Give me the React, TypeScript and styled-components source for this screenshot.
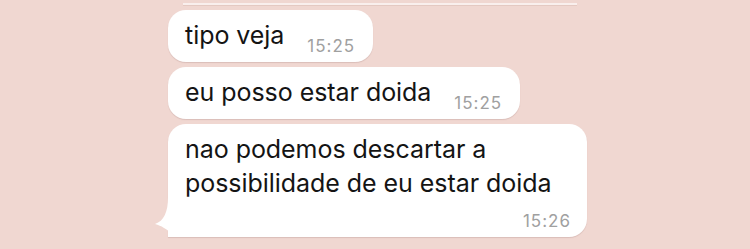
import React from "react";
import styled, { createGlobalStyle } from "styled-components";

const Global = createGlobalStyle`
  html, body { margin: 0; padding: 0; }
  body {
    width: 750px;
    height: 249px;
    overflow: hidden;
    background: #f0d7d1;
    font-family: Inter, "Noto Sans", "Liberation Sans", sans-serif;
    -webkit-font-smoothing: antialiased;
  }
`;

const Chat = styled.div`
  display: flex;
  flex-direction: column;
  align-items: flex-start;
  gap: 5px;
  padding-left: 168px;
  width: 750px;
  height: 249px;
  box-sizing: border-box;
`;

const PrevEdge = styled.div`
  margin-left: 15px;
  width: 394px;
  height: 2px;
  margin-top: 3px;
  background: rgba(255, 255, 255, 0.6);
  box-shadow: 0 1px 0 rgba(160, 120, 115, 0.15);
`;

const Bubble = styled.div<{ $tail?: boolean }>`
  position: relative;
  background: #ffffff;
  border-radius: 18px;
  ${(p) => (p.$tail ? "border-bottom-left-radius: 0;" : "")}
  box-shadow: 0 1px 1px rgba(120, 80, 75, 0.18);
  box-sizing: border-box;
`;

const InlineBubble = styled(Bubble)`
  display: flex;
  align-items: flex-end;
  gap: 23px;
  height: 52px;
  padding: 0 18px 10px 17px;
`;

const BlockBubble = styled(Bubble)`
  display: flex;
  flex-direction: column;
  width: 419px;
  height: 113px;
  padding: 8px 17px 0 17px;
`;

const Text = styled.div`
  font-size: 25px;
  line-height: 34px;
  color: #141414;
  letter-spacing: -0.05px;
  white-space: nowrap;
`;

const Time = styled.span<{ $block?: boolean }>`
  font-size: 17px;
  line-height: 20px;
  color: #a0a0a0;
  letter-spacing: 1px;
  margin-bottom: -4px;
  ${(p) => (p.$block ? "align-self: flex-end; margin-top: 11px; margin-right: -1px;" : "")}
`;

const Tail = styled.svg`
  position: absolute;
  left: -14px;
  bottom: 0;
  width: 34px;
  height: 40px;
`;

export default function App() {
  return (
    <>
      <Global />
      <Chat>
        <PrevEdge />
        <InlineBubble>
          <Text>tipo veja</Text>
          <Time>15:25</Time>
        </InlineBubble>
        <InlineBubble>
          <Text>eu posso estar doida</Text>
          <Time>15:25</Time>
        </InlineBubble>
        <BlockBubble $tail>
          <Tail viewBox="0 0 34 40">
            <path
              d="M14,0 C14,15 10,24 1,27 C8,29 12,32 16,35 C20,38 26,40 34,40 L34,0 Z"
              fill="#ffffff"
            />
          </Tail>
          <Text>
            nao podemos descartar a
            <br />
            possibilidade de eu estar doida
          </Text>
          <Time $block>15:26</Time>
        </BlockBubble>
      </Chat>
    </>
  );
}
